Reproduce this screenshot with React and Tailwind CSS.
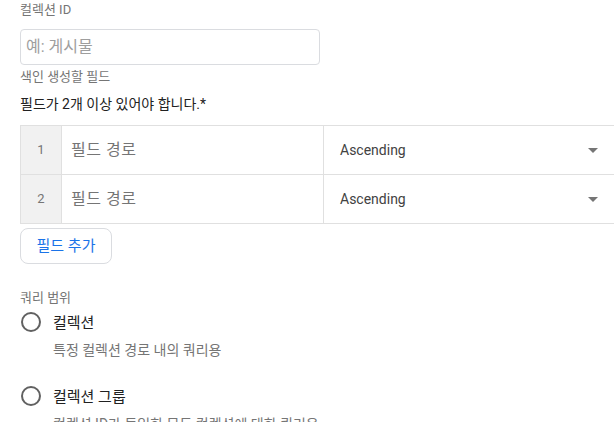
import React from "react";

const font = { fontFamily: 'Roboto, "Noto Sans CJK KR", sans-serif' };

function Caret() {
  return (
    <svg width="10" height="5" viewBox="0 0 10 5" className="shrink-0">
      <path d="M0 0 L10 0 L5 5 Z" fill="#757575" />
    </svg>
  );
}

function Row({ n, last }) {
  return (
    <div className={`flex ${last ? "h-[48px]" : "h-[49px] border-b border-[#e0e0e0]"}`}>
      <div className="w-[41px] shrink-0 bg-[#f1f1f1] border-r border-[#e0e0e0] flex items-center justify-center text-[13px] text-[#757575]">
        {n}
      </div>
      <div className="w-[262px] shrink-0 border-r border-[#e0e0e0] flex items-center pl-[9px] text-[16px] tracking-[0.5px] text-[#757575]">
        필드 경로
      </div>
      <div className="flex-1 flex items-center pl-[16px] pr-[16px] justify-between text-[14px] text-[#424242]">
        <span>Ascending</span>
        <Caret />
      </div>
    </div>
  );
}

function Radio({ title, desc }) {
  return (
    <div className="flex">
      <div className="w-[33px] shrink-0 pl-[1px]">
        <div className="w-[20px] h-[20px] rounded-full border-2 border-[#616161]" />
      </div>
      <div className="flex flex-col">
        <div className="text-[15px] text-[#212121] leading-[20px] mt-[1px]">{title}</div>
        <div className="text-[14px] text-[#757575] mt-[7px] leading-[20px] whitespace-nowrap">{desc}</div>
      </div>
    </div>
  );
}

export default function App() {
  return (
    <div className="w-[614px] h-[422px] overflow-hidden bg-white" style={font}>
      <div className="pl-[20px] pt-[2px]">
        <div className="text-[13px] text-[#757575] leading-[16px]">컬렉션 ID</div>
        <div className="mt-[11px] w-[300px] h-[36px] border border-[#dadce0] rounded-[4px] flex items-center pl-[5px] text-[16px] text-[#9e9e9e]">
          예: 게시물
        </div>
        <div className="mt-[4px] text-[13px] text-[#757575] leading-[16px]">색인 생성할 필드</div>
        <div className="mt-[9px] text-[14px] text-[#212121] leading-[20px]">필드가 2개 이상 있어야 합니다.*</div>
        <div className="mt-[11px] w-[594px] border-t border-b border-l border-[#e0e0e0]">
          <Row n={1} />
          <Row n={2} last />
        </div>
        <div className="mt-[4px] w-[92px] h-[36px] border border-[#dadce0] rounded-[8px] flex items-center justify-center text-[15px] text-[#1a73e8]">
          필드 추가
        </div>
        <div className="mt-[26px] text-[13px] text-[#757575] leading-[16px]">쿼리 범위</div>
        <div className="mt-[6px]">
          <Radio title="컬렉션" desc="특정 컬렉션 경로 내의 쿼리용" />
        </div>
        <div className="mt-[26px]">
          <Radio title="컬렉션 그룹" desc="컬렉션 ID가 동일한 모든 컬렉션에 대한 쿼리용" />
        </div>
      </div>
    </div>
  );
}
